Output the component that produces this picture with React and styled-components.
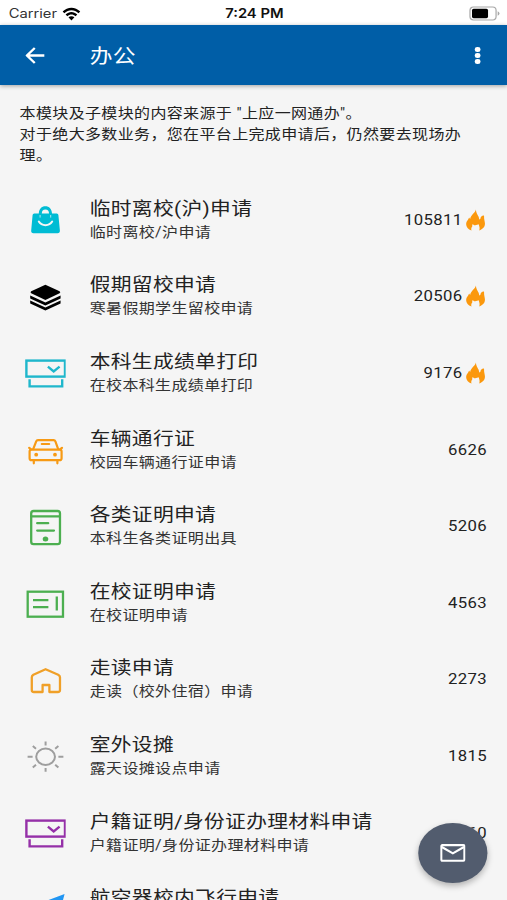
import styled, { createGlobalStyle } from 'styled-components'

const GlobalStyle = createGlobalStyle`
  html, body {
    margin: 0;
    height: 900px;
    overflow: hidden;
    background: #f5f5f5;
  }
`

const items = [
    { icon: 'bag', color: '#00bcd4', title: '临时离校(沪)申请', desc: '临时离校/沪申请', count: 105811, hot: true },
    { icon: 'layers', color: '#000', title: '假期留校申请', desc: '寒暑假期学生留校申请', count: 20506, hot: true },
    { icon: 'printer', color: '#1fb7cc', title: '本科生成绩单打印', desc: '在校本科生成绩单打印', count: 9176, hot: true },
    { icon: 'car', color: '#f79a14', title: '车辆通行证', desc: '校园车辆通行证申请', count: 6626 },
    { icon: 'tablet', color: '#4caf50', title: '各类证明申请', desc: '本科生各类证明出具', count: 5206 },
    { icon: 'ticket', color: '#4caf50', title: '在校证明申请', desc: '在校证明申请', count: 4563 },
    { icon: 'house', color: '#f0a028', title: '走读申请', desc: '走读（校外住宿）申请', count: 2273 },
    { icon: 'sun', color: '#9e9e9e', title: '室外设摊', desc: '露天设摊设点申请', count: 1815 },
    { icon: 'printer', color: '#9530a8', title: '户籍证明/身份证办理材料申请', desc: '户籍证明/身份证办理材料申请', count: 1660 },
    { icon: 'plane', color: '#2196f3', title: '航空器校内飞行申请' },
]

const shapes = {
    bag: (
        <g stroke="none" fill="currentColor">
            <path d="M10 14.5H14.6C14.8 10 17.4 7.3 21.2 7.3S27.6 10 27.8 14.5H32.6Q34 14.5 34.2 16L35.7 31.6Q35.8 34.2 33.4 34.2H9.2Q6.8 34.2 7 31.6L8.4 16Q8.6 14.5 10 14.5Z" />
            <path d="M15.9 18.6V16M26.5 18.6V16" fill="none" stroke="#f5f5f5" strokeWidth=".9" opacity=".8" />
            <path d="M17.6 14.5C17.6 11.8 18.8 10.4 21.2 10.4S24.8 11.8 24.8 14.5Z" fill="#f5f5f5" />
            <path d="M14.6 22.6C17.4 27.4 25.2 27.4 28 22.6" fill="none" stroke="#f5f5f5" strokeWidth="2" strokeLinecap="round" />
        </g>
    ),
    layers: (
        <g stroke="none" fill="currentColor">
            <path d="M21.2 8.8L35.4 15.3Q36.8 16.3 35.4 17.3L21.2 24L7 17.3Q5.6 16.3 7 15.3Z" />
            <path d="M6 19.4L21.2 26.4L36.4 19.4V22.4L21.2 29.4L6 22.4Z" />
            <path d="M6 24.6L21.2 31.5L36.4 24.6V27.5L21.2 34.5L6 27.5Z" />
        </g>
    ),
    printer: (
        <g strokeWidth="2.4">
            <rect x="2.2" y="8.6" width="38.6" height="16" />
            <path d="M5.4 27.2V34.4H38V27.2" />
            <path d="M23.7 14.6L29.5 19.4L35.4 14.6" />
        </g>
    ),
    car: (
        <g strokeWidth="2.2" strokeLinecap="round">
            <rect x="5.4" y="20.6" width="32" height="10.6" rx="2" />
            <path d="M9 20.2L12 12.4Q12.5 11.2 13.8 11.2H29.4Q30.7 11.2 31.2 12.4L34 20.2" />
            <path d="M17.6 15H25M9.6 32V34.3M33.2 32V34.3M5 18.8L6.6 20.2M37.8 18.8L36.2 20.2" />
            <circle cx="12" cy="25.7" r="1.9" fill="currentColor" stroke="none" />
            <circle cx="30.8" cy="25.7" r="1.9" fill="currentColor" stroke="none" />
        </g>
    ),
    tablet: (
        <g strokeWidth="2.3" strokeLinecap="round">
            <rect x="7" y="5" width="28.8" height="33.2" rx="2.4" />
            <path d="M7 10.3H35.6M13 17.2H24M13 24.6H29.8" />
            <ellipse cx="21.3" cy="33" rx="2.8" ry="2.5" fill="currentColor" stroke="none" />
        </g>
    ),
    ticket: (
        <g strokeWidth="2.3">
            <rect x="3.5" y="9.7" width="35.3" height="25" />
            <path d="M8.8 18.2H24.2M8.8 25.1H24.2M32.6 14.6V28.4" />
        </g>
    ),
    house: (
        <path strokeWidth="2.3" strokeLinejoin="round" d="M21.4 10.2L9.2 15.8Q7.6 16.8 7.6 18.2V31Q7.6 33 9.6 33H18.4V26H25.2V33H33.6Q35.8 33 35.8 31V18.2Q35.8 16.8 34 15.8Z" />
    ),
    sun: (
        <g strokeWidth="2">
            <ellipse cx="21.4" cy="21.7" rx="9.4" ry="8.2" />
            <path d="M3.4 21.7H8.4M34.2 21.7H39.2M21.4 6.6V10.4M21.4 33V36.8M8.6 11L11.8 13.7M34.2 11L31 13.7M8.6 32.6L11.8 29.8M34.2 32.6L31 29.8" />
        </g>
    ),
    plane: (
        <path stroke="none" fill="currentColor" d="M40.4 5L3 19L15 25L33 12L19 27V35L25 30L33 33Z" />
    ),
}

const Flame = () => (
    <FlameSvg viewBox="0 0 20 22" preserveAspectRatio="none">
        <path d="M10.4 .4C10 3.4 5.2 5.6 4.6 10C4.3 9.4 4 9 3.5 8.6C3.2 10.8 .6 12 .6 14.9C.6 17.8 2.6 20.2 6 21.4C5.4 20 5.8 18.6 6.8 17.2C6.6 16.4 6.7 15.5 7.4 14.9C7.8 15.8 8.6 16.4 9.6 16.2C11 15.9 12.4 15.8 13.2 15.2C13.2 16.6 14.8 18.2 13.7 21.4C17.2 20.4 19.4 17.8 19.4 14.8C19.4 12.2 18.3 10.4 18.5 6.4C16.4 6.2 14.9 7.6 14.9 9.6C14.9 10.6 13.6 10.8 13.5 9.4C13.4 6.6 10.6 5.2 10.4 .4Z" />
    </FlameSvg>
)

const Row = ({ icon, color, title, desc, count, hot }) => (
    <RowContainer>
        <RowIcon color={color} viewBox="0 0 42 42" preserveAspectRatio="none">{shapes[icon]}</RowIcon>
        <RowText>
            <Title>{title}</Title>
            <Desc>{desc}</Desc>
        </RowText>
        <Count>{count}</Count>
        {hot && <Flame />}
    </RowContainer>
)

const App = () => (
    <>
        <GlobalStyle />
        <Screen>
            <StatusBar>
                <Carrier>
                    Carrier
                    <svg width="16" height="14" viewBox="0 0 18 14" preserveAspectRatio="none">
                        <path d="M.4 4.6C5.2-.6 12.8-.6 17.6 4.6L15.9 6.3C12 2.2 6 2.2 2.1 6.3Z" />
                        <path d="M3.3 7.5C6.6 4.1 11.4 4.1 14.7 7.5L13 9.2C10.6 6.9 7.4 6.9 5 9.2Z" />
                        <path d="M6.1 10.3C7.8 8.8 10.2 8.8 11.9 10.3L9 13.4Z" />
                    </svg>
                </Carrier>
                <Time>7:24 PM</Time>
                <Battery>
                    <svg width="27" height="15" viewBox="0 0 31 15" preserveAspectRatio="none">
                        <rect x="1" y="1" width="26" height="13" rx="3.4" fill="none" stroke="#a8a8a8" strokeWidth="1.2" />
                        <rect x="3" y="2.8" width="16" height="9.4" rx="1.6" />
                        <path d="M28.6 5.2Q30.4 6.2 30.4 7.5T28.6 9.8Z" fill="#a8a8a8" />
                    </svg>
                </Battery>
            </StatusBar>
            <AppBar>
                <BackIcon viewBox="0 0 20 18" preserveAspectRatio="none">
                    <path d="M19.4 9H2M9.6 1L1.6 9L9.6 17" />
                </BackIcon>
                <BarTitle>办公</BarTitle>
                <Dots>
                    <i />
                    <i />
                    <i />
                </Dots>
            </AppBar>
            <Content>
                <Intro>
                    <p>本模块及子模块的内容来源于 "上应一网通办"。</p>
                    <p>对于绝大多数业务，您在平台上完成申请后，仍然要去现场办理。</p>
                </Intro>
                {items.map(item => <Row key={item.title} {...item} />)}
            </Content>
            <MailButton>
                <svg width="22" height="18" viewBox="0 0 25 18" preserveAspectRatio="none">
                    <rect x="1.1" y="1.1" width="22.8" height="15.6" rx="1" />
                    <path d="M1.6 3L12.5 9.4L23.4 3" />
                </svg>
            </MailButton>
        </Screen>
    </>
)

export default App

// laid out on a 440px wide screen, then widened to fill the 507px window
const Screen = styled.div`
  position: relative;
  display: flex;
  flex-direction: column;
  width: 440px;
  height: 900px;
  overflow: hidden;
  transform: scaleX(1.15227);
  transform-origin: 0 0;
  background: #f5f5f5;
  color: #222;
  font-family: Roboto, 'Noto Sans CJK SC', sans-serif;
`

const StatusBar = styled.div`
  display: grid;
  grid-template-columns: 1fr auto 1fr;
  align-items: center;
  flex: none;
  height: 25px;
  padding: 2px 6px 0 7.5px;
  box-sizing: border-box;
  background: white;
  color: #111;
  font-family: Inter, sans-serif;
  font-size: 12.8px;
`

const Carrier = styled.div`
  display: flex;
  align-items: center;
  gap: 4.5px;
  color: #333;
  svg {
    fill: #000;
  }
`

const Time = styled.div`
  font-weight: 600;
`

const Battery = styled.div`
  display: flex;
  justify-content: flex-end;
`

const AppBar = styled.div`
  position: relative;
  display: flex;
  align-items: center;
  flex: none;
  height: 60px;
  padding: 1px 23.5px 0 22.3px;
  box-sizing: border-box;
  background: #005ea7;
  color: white;
  box-shadow: 0 1px 4px rgba(0,0,0,.35);
`

const BackIcon = styled.svg`
  width: 17px;
  height: 17px;
  fill: none;
  stroke: white;
  stroke-width: 2.4;
`

const BarTitle = styled.div`
  flex: 1;
  margin-left: 38.7px;
  padding-top: 3.5px;
  font-size: 19.8px;
  line-height: 24px;
`

const Dots = styled.div`
  display: grid;
  row-gap: 1.7px;
  i {
    width: 4.4px;
    height: 4.6px;
    border-radius: 50%;
    background: white;
  }
`

const Content = styled.div`
  flex: 1;
  min-height: 0;
  overflow: hidden;
`

const Intro = styled.div`
  height: 97px;
  padding: 17.5px 17.4px 0 17px;
  box-sizing: border-box;
  font-size: 13.9px;
  line-height: 21.3px;
  letter-spacing: .3px;
  p {
    margin: 0;
  }
`

const RowContainer = styled.div`
  display: flex;
  align-items: center;
  height: 76.6px;
  padding: 0 17.4px 0 21px;
`

const RowIcon = styled.svg`
  flex: none;
  width: 36.45px;
  height: 42px;
  color: ${({ color }) => color};
  fill: none;
  stroke: currentColor;
`

const RowText = styled.div`
  flex: 1;
  height: 49px;
  margin-left: 20.4px;
  white-space: nowrap;
`

const Title = styled.div`
  font-size: 18px;
  line-height: 25px;
  letter-spacing: .3px;
`

const Desc = styled.div`
  font-size: 13.9px;
  line-height: 22px;
  letter-spacing: .3px;
  color: #333;
`

const Count = styled.div`
  font-size: 14.5px;
  letter-spacing: .3px;
`

const FlameSvg = styled.svg`
  width: 17.4px;
  height: 22px;
  margin: 0 .8px 1px 3px;
  fill: #fb980d;
`

const MailButton = styled.div`
  position: absolute;
  right: 17px;
  bottom: 17.5px;
  display: grid;
  place-items: center;
  width: 59.8px;
  height: 59.5px;
  border-radius: 50%;
  background: #525c6e;
  box-shadow: 0 3px 6px rgba(0,0,0,.28);
  svg {
    fill: none;
    stroke: white;
    stroke-width: 2.1;
  }
`
